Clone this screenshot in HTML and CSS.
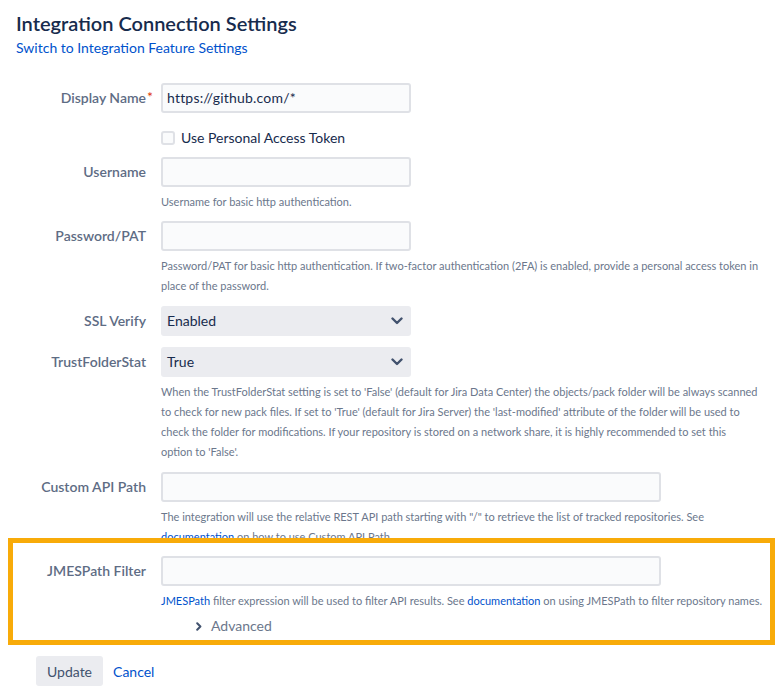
FILE: index.html
```html
<!DOCTYPE html>
<html lang="en">
<head>
<meta charset="utf-8">
<title>Integration Connection Settings</title>
<link rel="stylesheet" href="styles.css">
</head>
<body>
<div class="page">
  <h1 class="title">Integration Connection Settings</h1>
  <a class="switch-link" href="#">Switch to Integration Feature Settings</a>

  <form class="form">
    <div class="field">
      <label class="label">Display Name<span class="req">*</span></label>
      <div class="control">
        <div class="input short">https://github.com/*</div>
      </div>
    </div>

    <div class="field check-row">
      <div class="label"></div>
      <div class="control">
        <label class="checkbox"><span class="box"></span>Use Personal Access Token</label>
      </div>
    </div>

    <div class="field tight">
      <label class="label">Username</label>
      <div class="control">
        <div class="input short"></div>
        <div class="help">Username for basic http authentication.</div>
      </div>
    </div>

    <div class="field">
      <label class="label">Password/PAT</label>
      <div class="control">
        <div class="input short"></div>
        <div class="help">Password/PAT for basic http authentication. If two-factor authentication (2FA) is enabled, provide a personal access token in place of the password.</div>
      </div>
    </div>

    <div class="field loose">
      <label class="label">SSL Verify</label>
      <div class="control">
        <div class="select short">Enabled
          <svg class="chev" width="12" height="8" viewBox="0 0 12 8"><polyline points="1.5,1.5 6,6 10.5,1.5" fill="none" stroke="#42526e" stroke-width="2.4" stroke-linecap="round" stroke-linejoin="round"/></svg>
        </div>
      </div>
    </div>

    <div class="field">
      <label class="label">TrustFolderStat</label>
      <div class="control">
        <div class="select short">True
          <svg class="chev" width="12" height="8" viewBox="0 0 12 8"><polyline points="1.5,1.5 6,6 10.5,1.5" fill="none" stroke="#42526e" stroke-width="2.4" stroke-linecap="round" stroke-linejoin="round"/></svg>
        </div>
        <div class="help">When the TrustFolderStat setting is set to 'False' (default for Jira Data Center) the objects/pack folder will be always scanned to check for new pack files. If set to 'True' (default for Jira Server) the 'last-modified' attribute of the folder will be used to check the folder for modifications. If your repository is stored on a network share, it is highly recommended to set this option to 'False'.</div>
      </div>
    </div>

    <div class="field tight">
      <label class="label">Custom API Path</label>
      <div class="control">
        <div class="input long"></div>
        <div class="help">The integration will use the relative REST API path starting with "/" to retrieve the list of tracked repositories. See <a href="#">documentation</a> on how to use Custom API Path.</div>
      </div>
    </div>

    <div class="field">
      <label class="label">JMESPath Filter</label>
      <div class="control">
        <div class="input long"></div>
        <div class="help nowrap"><a href="#">JMESPath</a> filter expression will be used to filter API results. See <a href="#">documentation</a> on using JMESPath to filter repository names.</div>
        <div class="advanced">
          <svg width="6" height="9" viewBox="0 0 6 9"><polyline points="1.2,1.2 4.4,4.5 1.2,7.8" fill="none" stroke="#42526e" stroke-width="2" stroke-linecap="round" stroke-linejoin="round"/></svg>
          <span>Advanced</span>
        </div>
      </div>
    </div>

    <div class="buttons">
      <button type="button" class="btn">Update</button>
      <a class="cancel" href="#">Cancel</a>
    </div>
  </form>

  <div class="highlight"></div>
</div>
</body>
</html>
```

FILE: styles.css
```css
* { box-sizing: border-box; }

html, body {
  margin: 0;
  padding: 0;
  background: #ffffff;
}

body {
  font-family: Lato, "Liberation Sans", sans-serif;
  color: #172b4d;
  font-size: 14px;
}

.page {
  position: relative;
  width: 780px;
  height: 699px;
  padding: 11px 0 0 16px;
}

.title {
  margin: 0;
  font-size: 20px;
  line-height: 24px;
  font-weight: 600;
  color: #172b4d;
}

.switch-link {
  display: block;
  margin-top: 1px;
  font-size: 14px;
  line-height: 24px;
  color: #0052cc;
  text-decoration: none;
}

a { color: #0052cc; text-decoration: none; }

.form {
  margin-top: 23px;
  margin-left: -16px;
}

.field {
  display: grid;
  grid-template-columns: 146px 1fr;
  column-gap: 15px;
  margin-bottom: 10px;
}

.field.tight { margin-bottom: 9px; }
.field.loose { margin-bottom: 11px; }

.label {
  position: relative;
  text-align: right;
  font-size: 14px;
  line-height: 30px;
  font-weight: 600;
  color: #5e6c84;
}

.req {
  position: absolute;
  left: 100%;
  top: -1px;
  margin-left: 1px;
  color: #de350b;
  font-weight: 400;
}

.input, .select {
  height: 30px;
  border-radius: 3px;
  font-size: 14px;
  line-height: 26px;
  color: #172b4d;
}

.input {
  background: #fafbfc;
  border: 2px solid #dfe1e6;
  padding: 0 4px;
  letter-spacing: 0.2px;
}

.select {
  background: #ebecf0;
  padding: 2px 6px;
  display: flex;
  align-items: center;
  justify-content: space-between;
}

.chev { margin-right: 2px; }

.short { width: 250px; }
.long { width: 500px; }

.help {
  margin-top: 5px;
  font-size: 11px;
  line-height: 20px;
  color: #6b778c;
  max-width: 598px;
}

.nowrap { white-space: nowrap; max-width: none; }

.check-row { margin-top: 15px; margin-bottom: 9px; }

.checkbox {
  display: flex;
  align-items: center;
  gap: 6px;
  font-size: 14px;
  line-height: 20px;
  color: #172b4d;
}

.box {
  width: 14px;
  height: 14px;
  border: 2px solid #dfe1e6;
  background: #fafbfc;
  border-radius: 3px;
}

.advanced {
  display: flex;
  align-items: center;
  gap: 9px;
  margin-top: 5px;
  margin-left: 35px;
  font-size: 14px;
  line-height: 20px;
  color: #6b778c;
}

.buttons {
  display: flex;
  align-items: center;
  gap: 10px;
  margin-top: 20px;
  padding-left: 36px;
}

.btn {
  height: 30px;
  padding: 0 11px;
  border: none;
  border-radius: 3px;
  background: #ebecf0;
  color: #42526e;
  font-family: inherit;
  font-size: 14px;
}

.cancel { font-size: 14px; }

.highlight {
  position: absolute;
  left: 8px;
  top: 538px;
  width: 767px;
  height: 107px;
  border: 5px solid #f8ab09;
  pointer-events: none;
}
```
